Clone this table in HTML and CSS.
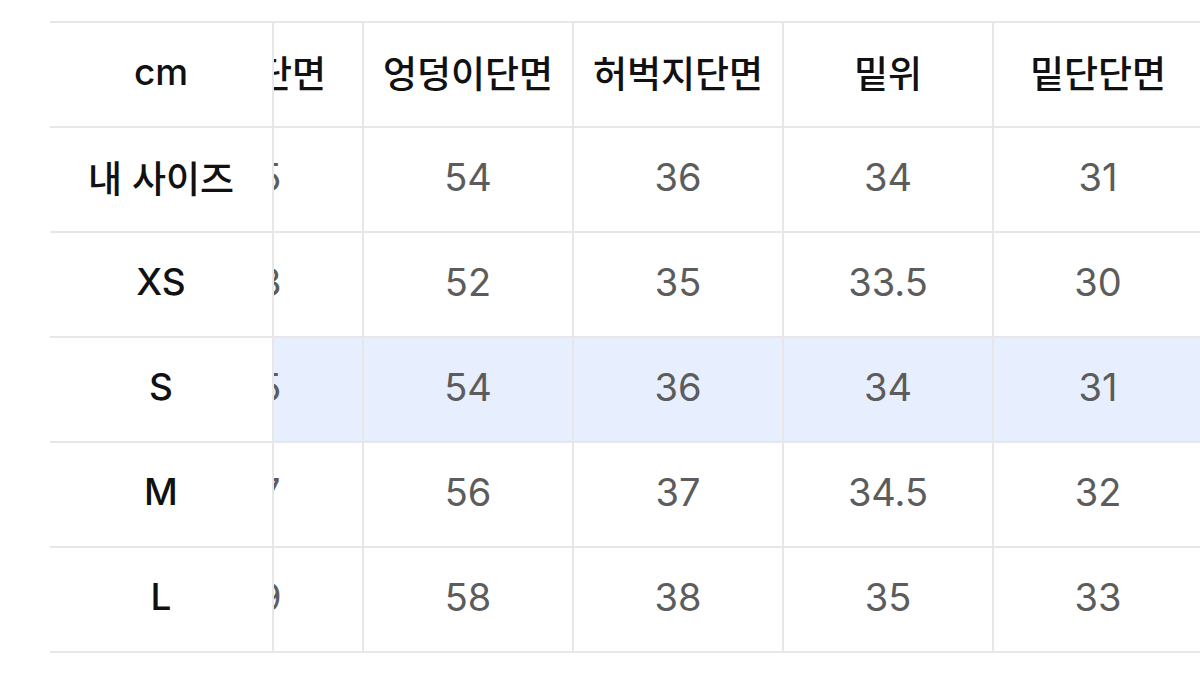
FILE: index.html
```html
<!DOCTYPE html>
<html lang="ko">
<head>
<meta charset="utf-8">
<link rel="stylesheet" href="styles.css">
</head>
<body>
<div class="size-table">
  <div class="fixed-col">
    <div class="cell label">cm</div>
    <div class="cell label">내 사이즈</div>
    <div class="cell label">XS</div>
    <div class="cell label">S</div>
    <div class="cell label">M</div>
    <div class="cell label">L</div>
  </div>
  <div class="scroller">
    <div class="grid">
      <div class="cell head">허리단면</div>
      <div class="cell head">엉덩이단면</div>
      <div class="cell head">허벅지단면</div>
      <div class="cell head">밑위</div>
      <div class="cell head">밑단단면</div>

      <div class="cell num">35</div>
      <div class="cell num">54</div>
      <div class="cell num">36</div>
      <div class="cell num">34</div>
      <div class="cell num">31</div>

      <div class="cell num">33</div>
      <div class="cell num">52</div>
      <div class="cell num">35</div>
      <div class="cell num">33.5</div>
      <div class="cell num">30</div>

      <div class="cell num hl">35</div>
      <div class="cell num hl">54</div>
      <div class="cell num hl">36</div>
      <div class="cell num hl">34</div>
      <div class="cell num hl">31</div>

      <div class="cell num">37</div>
      <div class="cell num">56</div>
      <div class="cell num">37</div>
      <div class="cell num">34.5</div>
      <div class="cell num">32</div>

      <div class="cell num">39</div>
      <div class="cell num">58</div>
      <div class="cell num">38</div>
      <div class="cell num">35</div>
      <div class="cell num">33</div>
    </div>
  </div>
</div>
</body>
</html>
```
FILE: styles.css
```css
html, body {
  margin: 0;
  padding: 0;
  background: #ffffff;
}
body {
  font-family: "Inter", "Noto Sans CJK KR", sans-serif;
  color: #111111;
  overflow: hidden;
  width: 1200px;
  height: 678px;
}
.size-table {
  display: flex;
  margin: 21px 0 0 50px;
  border-top: 2px solid #e7e7e7;
}
.fixed-col {
  flex: 0 0 224px;
  display: flex;
  flex-direction: column;
  border-right: 2px solid #e7e7e7;
  box-sizing: border-box;
  background: #ffffff;
}
.scroller {
  flex: 1 1 auto;
  overflow: hidden;
}
.grid {
  display: grid;
  grid-template-columns: repeat(5, 210px);
  margin-left: -120px;
  width: 1050px;
}
.cell {
  height: 105px;
  box-sizing: border-box;
  padding-bottom: 6px;
  border-bottom: 2px solid #e7e7e7;
  display: flex;
  align-items: center;
  justify-content: center;
  white-space: nowrap;
}
.grid .cell {
  border-right: 2px solid #e7e7e7;
}
.label {
  color: #111111;
  font-size: 37px;
  font-weight: 500;
}
.head {
  color: #111111;
  font-size: 37px;
  font-weight: 500;
}
.num {
  color: #5c5c5c;
  font-size: 38px;
  font-weight: 400;
}
.hl {
  background: #e7eefd;
}
```
